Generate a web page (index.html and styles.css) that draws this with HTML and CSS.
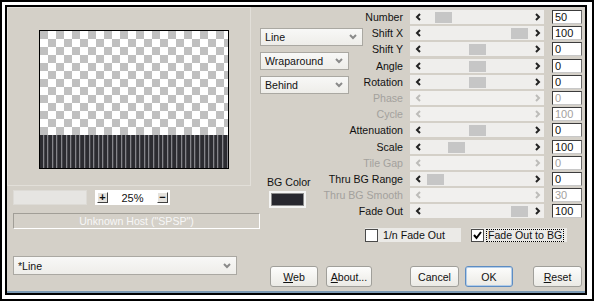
FILE: index.html
```html
<!DOCTYPE html>
<html lang="en">
<head>
  <meta charset="UTF-8">
  <title>Line</title>
  <link rel="stylesheet" href="styles.css">
</head>
<body>
  <div class="frame">
    <div class="dialog">
      <div class="dialog-body">
        <div class="left-col">
          <div class="preview-panel">
            <div class="preview">
              <div class="checker"></div>
              <div class="stripes"></div>
            </div>
          </div>
          <div class="zoom-row">
            <div class="zoom-bar"></div>
            <div class="zoom-box">
              <span class="mini-btn">+</span>
              <span class="zoom-value">25%</span>
              <span class="mini-btn">&minus;</span>
            </div>
          </div>
          <div class="host-box">Unknown Host ("SPSP")</div>
          <div class="select preset">*Line<svg class="chev" width="8" height="6" viewBox="0 0 8 6"><polyline points="1,1 4,4 7,1"/></svg></div>
        </div>

        <div class="right-col">
          <div class="params">
            <div class="options">
              <div class="select sel-wide">Line<svg class="chev" width="8" height="6" viewBox="0 0 8 6"><polyline points="1,1 4,4 7,1"/></svg></div>
              <div class="select sel-narrow">Wraparound<svg class="chev" width="8" height="6" viewBox="0 0 8 6"><polyline points="1,1 4,4 7,1"/></svg></div>
              <div class="select sel-narrow">Behind<svg class="chev" width="8" height="6" viewBox="0 0 8 6"><polyline points="1,1 4,4 7,1"/></svg></div>
              <div class="bg-color">
                <div class="bg-label">BG Color</div>
                <div class="swatch"></div>
              </div>
            </div>

            <div class="lbl">Number</div>
            <div class="track"><svg class="arr" width="6" height="8" viewBox="0 0 6 8"><polyline points="5,1 2,4 5,7"/></svg><span class="thumb" style="left:25px"></span><svg class="arr" width="6" height="8" viewBox="0 0 6 8"><polyline points="1,1 4,4 1,7"/></svg></div>
            <div class="val">50</div>

            <div class="lbl">Shift X</div>
            <div class="track"><svg class="arr" width="6" height="8" viewBox="0 0 6 8"><polyline points="5,1 2,4 5,7"/></svg><span class="thumb" style="left:101px"></span><svg class="arr" width="6" height="8" viewBox="0 0 6 8"><polyline points="1,1 4,4 1,7"/></svg></div>
            <div class="val">100</div>

            <div class="lbl">Shift Y</div>
            <div class="track"><svg class="arr" width="6" height="8" viewBox="0 0 6 8"><polyline points="5,1 2,4 5,7"/></svg><span class="thumb" style="left:59px"></span><svg class="arr" width="6" height="8" viewBox="0 0 6 8"><polyline points="1,1 4,4 1,7"/></svg></div>
            <div class="val">0</div>

            <div class="lbl">Angle</div>
            <div class="track"><svg class="arr" width="6" height="8" viewBox="0 0 6 8"><polyline points="5,1 2,4 5,7"/></svg><span class="thumb" style="left:59px"></span><svg class="arr" width="6" height="8" viewBox="0 0 6 8"><polyline points="1,1 4,4 1,7"/></svg></div>
            <div class="val">0</div>

            <div class="lbl">Rotation</div>
            <div class="track"><svg class="arr" width="6" height="8" viewBox="0 0 6 8"><polyline points="5,1 2,4 5,7"/></svg><span class="thumb" style="left:59px"></span><svg class="arr" width="6" height="8" viewBox="0 0 6 8"><polyline points="1,1 4,4 1,7"/></svg></div>
            <div class="val">0</div>

            <div class="lbl disabled">Phase</div>
            <div class="track disabled"><svg class="arr" width="6" height="8" viewBox="0 0 6 8"><polyline points="5,1 2,4 5,7"/></svg><svg class="arr" width="6" height="8" viewBox="0 0 6 8"><polyline points="1,1 4,4 1,7"/></svg></div>
            <div class="val disabled">0</div>

            <div class="lbl disabled">Cycle</div>
            <div class="track disabled"><svg class="arr" width="6" height="8" viewBox="0 0 6 8"><polyline points="5,1 2,4 5,7"/></svg><svg class="arr" width="6" height="8" viewBox="0 0 6 8"><polyline points="1,1 4,4 1,7"/></svg></div>
            <div class="val disabled">100</div>

            <div class="lbl">Attenuation</div>
            <div class="track"><svg class="arr" width="6" height="8" viewBox="0 0 6 8"><polyline points="5,1 2,4 5,7"/></svg><span class="thumb" style="left:59px"></span><svg class="arr" width="6" height="8" viewBox="0 0 6 8"><polyline points="1,1 4,4 1,7"/></svg></div>
            <div class="val">0</div>

            <div class="lbl">Scale</div>
            <div class="track"><svg class="arr" width="6" height="8" viewBox="0 0 6 8"><polyline points="5,1 2,4 5,7"/></svg><span class="thumb" style="left:38px"></span><svg class="arr" width="6" height="8" viewBox="0 0 6 8"><polyline points="1,1 4,4 1,7"/></svg></div>
            <div class="val">100</div>

            <div class="lbl disabled">Tile Gap</div>
            <div class="track disabled"><svg class="arr" width="6" height="8" viewBox="0 0 6 8"><polyline points="5,1 2,4 5,7"/></svg><svg class="arr" width="6" height="8" viewBox="0 0 6 8"><polyline points="1,1 4,4 1,7"/></svg></div>
            <div class="val disabled">0</div>

            <div class="lbl">Thru BG Range</div>
            <div class="track"><svg class="arr" width="6" height="8" viewBox="0 0 6 8"><polyline points="5,1 2,4 5,7"/></svg><span class="thumb" style="left:17px"></span><svg class="arr" width="6" height="8" viewBox="0 0 6 8"><polyline points="1,1 4,4 1,7"/></svg></div>
            <div class="val">0</div>

            <div class="lbl disabled">Thru BG Smooth</div>
            <div class="track disabled"><svg class="arr" width="6" height="8" viewBox="0 0 6 8"><polyline points="5,1 2,4 5,7"/></svg><svg class="arr" width="6" height="8" viewBox="0 0 6 8"><polyline points="1,1 4,4 1,7"/></svg></div>
            <div class="val disabled">30</div>

            <div class="lbl">Fade Out</div>
            <div class="track"><svg class="arr" width="6" height="8" viewBox="0 0 6 8"><polyline points="5,1 2,4 5,7"/></svg><span class="thumb" style="left:101px"></span><svg class="arr" width="6" height="8" viewBox="0 0 6 8"><polyline points="1,1 4,4 1,7"/></svg></div>
            <div class="val">100</div>
          </div>

          <div class="checks">
            <div class="check-item">
              <span class="box"></span>
              <span class="check-text">1/n Fade Out</span>
            </div>
            <div class="check-item second">
              <span class="box"><svg width="11" height="11" viewBox="0 0 11 11"><polyline points="2,5 4.5,8 9,2"/></svg></span>
              <span class="check-text focus">Fade Out to BG</span>
            </div>
          </div>

          <div class="buttons">
            <div class="btn btn-web"><span><u>W</u>eb</span></div>
            <div class="btn btn-about"><span><u>A</u>bout...</span></div>
            <div class="btn btn-cancel">Cancel</div>
            <div class="btn btn-ok default">OK</div>
            <div class="btn btn-reset"><span><u>R</u>eset</span></div>
          </div>
        </div>
      </div>
    </div>
  </div>
</body>
</html>
```

FILE: styles.css
```css
* {
  box-sizing: border-box;
}
body {
  margin: 0;
  background: #fff;
  font-family: "Liberation Sans", Arial, sans-serif;
  font-size: 10.6px;
  color: #111;
}
.frame {
  width: 594px;
  height: 301px;
  border: 2px solid #000;
  padding: 3px;
}
.dialog {
  width: 582px;
  height: 290px;
  border: 2px solid #000;
  background: #d4d0c8;
}
.dialog-body {
  height: 100%;
  display: flex;
  border-bottom: 2px solid #7c9ab4;
}

/* left column */
.left-col {
  width: 253px;
  display: flex;
  flex-direction: column;
}
.preview-panel {
  width: 244px;
  height: 179px;
  border: 1px solid #e2dfd9;
  padding: 22px 0 0 31px;
}
.preview {
  width: 190px;
  height: 139px;
  border: 1px solid #000;
  display: flex;
  flex-direction: column;
}
.checker {
  height: 104px;
  background-image: conic-gradient(#fff 25%, #c0c0c0 0 50%, #fff 0 75%, #c0c0c0 0);
  background-size: 16px 16px;
}
.stripes {
  flex: 1;
  background: repeating-linear-gradient(90deg, #2c2c31 0 2.6px, #85858a 2.6px 3.6px, #45454a 3.6px 4.6px);
}
.zoom-row {
  display: flex;
  gap: 8px;
  height: 15px;
  margin: 4px 0 0 6px;
}
.zoom-bar {
  width: 74px;
  background: #e6e5e2;
  border: 1px solid #dddbd6;
}
.zoom-box {
  width: 75px;
  background: #fff;
  display: flex;
  align-items: center;
  justify-content: space-between;
  padding: 0 2px;
}
.mini-btn {
  width: 11px;
  height: 11px;
  display: flex;
  align-items: center;
  justify-content: center;
  border: 1px solid;
  border-color: #fff #404040 #404040 #fff;
  background: #e4e2dd;
  font-weight: bold;
  font-size: 11px;
  line-height: 1;
}
.zoom-value {
  font-size: 11px;
}
.host-box {
  width: 247px;
  height: 16px;
  margin: 8px 0 0 6px;
  border: 1px solid;
  border-color: #a19e97 #fff #fff #a19e97;
  color: #f7f7f7;
  text-align: center;
  line-height: 14px;
}
.select {
  display: flex;
  align-items: center;
  justify-content: space-between;
  padding: 0 5px 0 4px;
  border: 1px solid #aaa8a2;
  background: linear-gradient(#f8f8f7, #eeede9);
}
.chev polyline {
  fill: none;
  stroke: #8a8a8a;
  stroke-width: 2;
}
.preset {
  width: 224px;
  height: 19px;
  margin: 27px 0 0 6px;
}

/* right column */
.right-col {
  flex: 1;
  display: flex;
  flex-direction: column;
}
.params {
  display: grid;
  grid-template-columns: 103px 47px 142px 30px;
  grid-auto-rows: 16.2px;
  margin-top: 3px;
}
.options {
  grid-column: 1;
  grid-row: 1 / span 13;
  display: flex;
  flex-direction: column;
  align-items: flex-start;
  gap: 6px;
  padding-top: 18px;
}
.sel-wide {
  width: 103px;
  height: 18px;
}
.sel-narrow {
  width: 89px;
  height: 18px;
}
.bg-color {
  margin: 76px 0 0 7px;
}
.bg-label {
  line-height: 13px;
}
.swatch {
  width: 37px;
  height: 17px;
  margin: 2px 0 0 2px;
  border: 2px solid #f4f4f3;
  background: #27272e;
  box-shadow: inset 0 0 0 1px #8c8c8c;
}
.lbl {
  display: flex;
  justify-content: flex-end;
  align-items: center;
  height: 14px;
  padding-right: 7px;
  white-space: nowrap;
}
.lbl.disabled {
  color: #a3a19d;
}
.track {
  position: relative;
  width: 134px;
  height: 14px;
  display: flex;
  justify-content: space-between;
  align-items: center;
  padding: 0 3px 0 5px;
  background: #efeeec;
}
.track.disabled {
  background: #f1f0ee;
}
.arr polyline {
  fill: none;
  stroke: #222;
  stroke-width: 2;
}
.track.disabled .arr polyline {
  stroke: #bdbcb9;
}
.thumb {
  position: absolute;
  top: 2px;
  width: 17px;
  height: 11px;
  background: #c6c6c6;
}
.val {
  width: 30px;
  height: 14px;
  padding-left: 2px;
  line-height: 12px;
  font-size: 11px;
  background: #fff;
  border: 1px solid;
  border-color: #3c3c3c #6a6a6a #c8c8c8 #3c3c3c;
}
.val.disabled {
  color: #a3a19d;
}

.checks {
  display: flex;
  gap: 10px;
  margin-top: 8px;
  padding-left: 105px;
}
.check-item {
  display: flex;
  align-items: center;
  gap: 5px;
  width: 96px;
  height: 14px;
  white-space: nowrap;
  background: #ebeae7;
}
.check-item.second {
  width: auto;
  gap: 2px;
  padding-right: 3px;
}
.box {
  flex: none;
  width: 13px;
  height: 13px;
  background: #fff;
  border: 1px solid #4a4a4a;
  display: flex;
  align-items: center;
  justify-content: center;
}
.box polyline {
  fill: none;
  stroke: #000;
  stroke-width: 2;
}
.check-text.focus {
  padding: 0 1px;
  border: 1px dotted #000;
  line-height: 11px;
}

.buttons {
  display: flex;
  margin-top: 24px;
  padding-left: 10px;
}
.btn {
  height: 21px;
  display: flex;
  align-items: center;
  justify-content: center;
  border: 1px solid #a09f9a;
  border-radius: 3px;
  background: linear-gradient(#fdfdfc, #ebeae5);
}
.btn.default {
  border-color: #5d8cc2;
  box-shadow: inset 0 0 0 1px #b2cdea;
}
.btn-web {
  width: 48px;
}
.btn-about {
  width: 46px;
  margin-left: 8px;
}
.btn-cancel {
  width: 49px;
  margin-left: 38px;
}
.btn-ok {
  width: 48px;
  margin-left: 6px;
}
.btn-reset {
  width: 49px;
  margin-left: 20px;
}
```
